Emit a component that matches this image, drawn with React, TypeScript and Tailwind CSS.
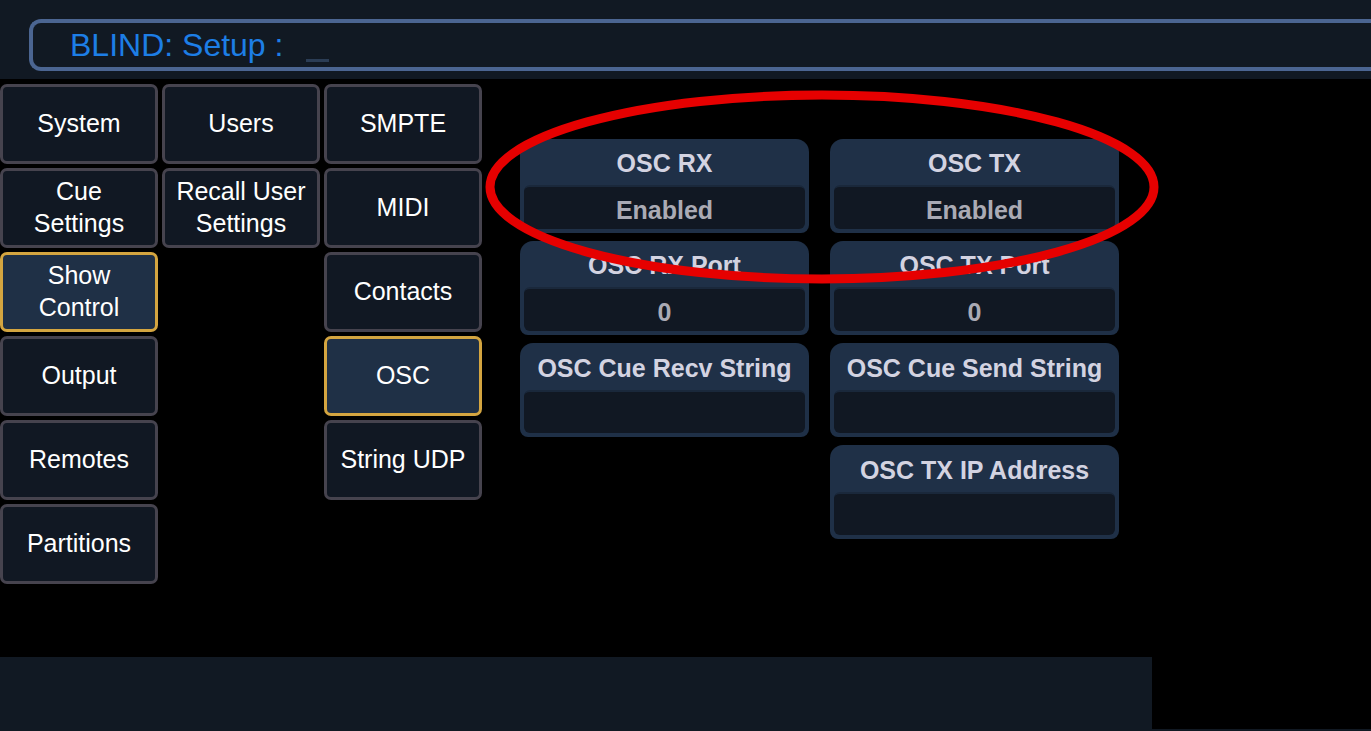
const leftCol = [
  { label: ["System"] },
  { label: ["Cue", "Settings"] },
  { label: ["Show", "Control"], active: true },
  { label: ["Output"] },
  { label: ["Remotes"] },
  { label: ["Partitions"] },
];

const midCol = [{ label: ["Users"] }, { label: ["Recall User", "Settings"] }];

const rightCol = [
  { label: ["SMPTE"] },
  { label: ["MIDI"] },
  { label: ["Contacts"] },
  { label: ["OSC"], active: true },
  { label: ["String UDP"] },
];

type Tab = { label: string[]; active?: boolean };

const TabButton = ({ tab }: { tab: Tab }) => (
  <div
    className={
      "w-[158px] h-[80px] rounded-[7px] border-[3px] flex flex-col items-center justify-center pb-[3px] text-white text-[25px] leading-[32px] " +
      (tab.active ? "bg-[#1f3046] border-[#d4a540]" : "bg-[#111823] border-[#46434e]")
    }
  >
    {tab.label.map((l) => (
      <span key={l} className="whitespace-nowrap">
        {l}
      </span>
    ))}
  </div>
);

type Field = { title: string; value?: string };

const FieldCard = ({ field }: { field: Field }) => (
  <div className="w-[289px] h-[94px] rounded-t-[13px] rounded-b-[8px] bg-[#1f3047] px-[4px] pb-[4px] flex flex-col">
    <div className="h-[47px] pt-[4px] flex items-center justify-center text-[#d3d3e1] text-[25px] font-bold whitespace-nowrap">
      {field.title}
    </div>
    <div className="flex-1 rounded-[6px] bg-[#111823] border-t-2 border-[#1a283b] pt-[5px] flex items-center justify-center text-[#aaaab4] text-[25px] font-bold">
      {field.value}
    </div>
  </div>
);

export default function App() {
  return (
    <div
      className="relative w-[1371px] h-[731px] bg-black overflow-hidden flex flex-col"
      style={{ fontFamily: '"Liberation Sans", Arial, sans-serif' }}
    >
      {/* Command line */}
      <div className="h-[79px] bg-[#111923] pt-[19px] pl-[29px] shrink-0">
        <div className="h-[52px] rounded-l-[12px] border-[4px] border-r-0 border-[#4b6591] flex items-center pl-[37px] text-[#1d7ee6] text-[32px]">
          <span>BLIND: Setup :</span>
          <span className="ml-[23px] mt-[30px] inline-block w-[23px] h-[3px] bg-[#2b3d55]" />
        </div>
      </div>

      <div className="flex pt-[5px] gap-[38px] flex-1">
        {/* Tab grid */}
        <div className="flex gap-[4px]">
          <div className="flex flex-col gap-[4px]">
            {leftCol.map((t) => (
              <TabButton key={t.label.join()} tab={t} />
            ))}
          </div>
          <div className="flex flex-col gap-[4px]">
            {midCol.map((t) => (
              <TabButton key={t.label.join()} tab={t} />
            ))}
          </div>
          <div className="flex flex-col gap-[4px]">
            {rightCol.map((t) => (
              <TabButton key={t.label.join()} tab={t} />
            ))}
          </div>
        </div>

        {/* OSC fields */}
        <div className="flex gap-[21px] pt-[55px]">
          <div className="flex flex-col gap-[8px]">
            <FieldCard field={{ title: "OSC RX", value: "Enabled" }} />
            <FieldCard field={{ title: "OSC RX Port", value: "0" }} />
            <FieldCard field={{ title: "OSC Cue Recv String" }} />
          </div>
          <div className="flex flex-col gap-[8px]">
            <FieldCard field={{ title: "OSC TX", value: "Enabled" }} />
            <FieldCard field={{ title: "OSC TX Port", value: "0" }} />
            <FieldCard field={{ title: "OSC Cue Send String" }} />
            <FieldCard field={{ title: "OSC TX IP Address" }} />
          </div>
        </div>
      </div>

      {/* Bottom strip */}
      <div className="h-[74px] shrink-0 flex">
        <div className="w-[1152px] bg-[#111923]" />
        <div className="flex-1 flex flex-col justify-end">
          <div className="h-[2px] bg-[#111923]" />
        </div>
      </div>

      {/* Red annotation ellipse */}
      <svg
        className="absolute left-0 top-0 pointer-events-none"
        width="1371"
        height="731"
      >
        <ellipse
          cx="822"
          cy="187"
          rx="332"
          ry="92"
          fill="none"
          stroke="#e60000"
          strokeWidth="9"
        />
      </svg>
    </div>
  );
}
